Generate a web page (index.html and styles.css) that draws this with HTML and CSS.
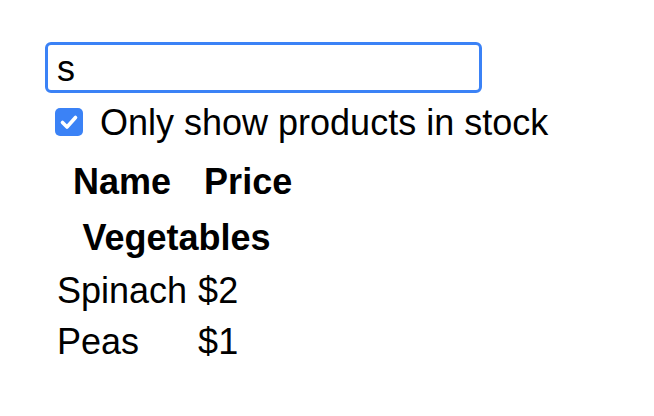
FILE: index.html
```html
<!DOCTYPE html>
<html>
<head>
<meta charset="utf-8">
<link rel="stylesheet" href="styles.css">
</head>
<body>
<div class="app">
  <form class="search-bar">
    <div class="search">s</div>
    <label class="stock">
      <span class="check"><svg viewBox="0 0 28 28" width="28" height="28"><path d="M7.5 14.5 L12 19 L20.5 9.5" fill="none" stroke="#fff" stroke-width="3.6" stroke-linecap="round" stroke-linejoin="round"/></svg></span>
      <span class="stock-label">Only show products in stock</span>
    </label>
  </form>
  <table class="products">
    <thead>
      <tr class="head-row"><th class="col-name">Name</th><th class="col-price">Price</th></tr>
    </thead>
    <tbody>
      <tr class="cat-row"><th colspan="2">Vegetables</th></tr>
      <tr class="item-row first"><td class="col-name">Spinach</td><td>$2</td></tr>
      <tr class="item-row"><td class="col-name">Peas</td><td>$1</td></tr>
    </tbody>
  </table>
</div>
</body>
</html>
```
FILE: styles.css
```css
html, body {
  margin: 0;
  padding: 0;
  background: #fff;
}
body {
  font-family: "Liberation Sans", Helvetica, Arial, sans-serif;
  font-size: 36px;
  color: #000;
}
.app {
  padding: 42px 0 0 45px;
}
.search-bar {
  margin: 0;
}
.search {
  box-sizing: border-box;
  width: 437px;
  height: 51px;
  border: 3px solid #3b82f6;
  border-radius: 6px;
  padding-left: 9px;
  line-height: 47px;
}
.stock {
  display: flex;
  align-items: center;
  height: 28px;
  margin-top: 15px;
}
.check {
  display: block;
  width: 28px;
  height: 28px;
  margin-left: 10px;
  background: #3b82f6;
  border-radius: 5px;
}
.check svg {
  display: block;
}
.stock-label {
  margin-left: 17px;
  line-height: 41px;
  white-space: nowrap;
}
.products {
  margin: 25px 0 0 12px;
  border-collapse: collapse;
}
.products th,
.products td {
  padding: 0;
  line-height: 41px;
  vertical-align: top;
}
.products th {
  text-align: center;
  font-weight: bold;
}
.products td {
  text-align: left;
}
.products .col-name {
  padding-right: 11px;
}
.products .col-price {
  padding-left: 6px;
}
.head-row th {
  padding-bottom: 15px;
}
.cat-row th {
  padding-bottom: 12px;
  padding-left: 4px;
}
.item-row.first td {
  padding-bottom: 10px;
}
```
